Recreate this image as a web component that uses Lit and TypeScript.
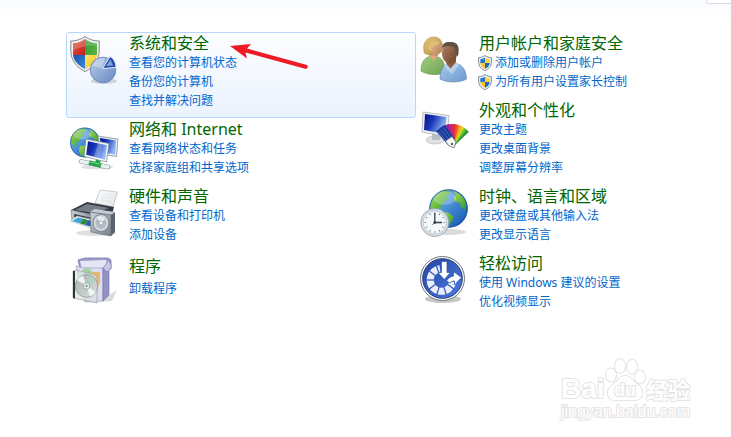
import { LitElement, html, css, svg, nothing, TemplateResult } from "lit";
import { customElement, property } from "lit/decorators.js";

type Link = { text: string; shield?: boolean };
type Category = {
  title: string;
  icon: string;
  links: Link[];
  active?: boolean;
  roomy?: boolean;
};

const leftColumn: Category[] = [
  {
    title: "系统和安全",
    icon: "security",
    active: true,
    links: [{ text: "查看您的计算机状态" }, { text: "备份您的计算机" }, { text: "查找并解决问题" }],
  },
  {
    title: "网络和 Internet",
    icon: "network",
    links: [{ text: "查看网络状态和任务" }, { text: "选择家庭组和共享选项" }],
  },
  {
    title: "硬件和声音",
    icon: "hardware",
    links: [{ text: "查看设备和打印机" }, { text: "添加设备" }],
  },
  { title: "程序", icon: "programs", roomy: true, links: [{ text: "卸载程序" }] },
];

const rightColumn: Category[] = [
  {
    title: "用户帐户和家庭安全",
    icon: "users",
    links: [
      { text: "添加或删除用户帐户", shield: true },
      { text: "为所有用户设置家长控制", shield: true },
    ],
  },
  {
    title: "外观和个性化",
    icon: "appearance",
    links: [{ text: "更改主题" }, { text: "更改桌面背景" }, { text: "调整屏幕分辨率" }],
  },
  {
    title: "时钟、语言和区域",
    icon: "clock",
    links: [{ text: "更改键盘或其他输入法" }, { text: "更改显示语言" }],
  },
  {
    title: "轻松访问",
    icon: "ease",
    links: [{ text: "使用 Windows 建议的设置" }, { text: "优化视频显示" }],
  },
];

const polar = (cx: number, cy: number, r: number, deg: number) => {
  const a = (deg * Math.PI) / 180;
  return `${(cx + r * Math.cos(a)).toFixed(2)} ${(cy + r * Math.sin(a)).toFixed(2)}`;
};

const globe = (cx: number, cy: number, r: number) => svg`
  <g transform="translate(${cx} ${cy}) scale(${r / 20})">
    <circle r="20" fill="url(#ocean)"/>
    <path d="M-17 -9C-13 -16 -7 -19 0 -19L1 -15L-3 -12L-1 -9L-6 -6L-8 -1L-12 1L-11 6L-15 4L-19 0C-19 -4 -18 -7 -17 -9Z" fill="url(#land)"/>
    <path d="M5 -18C12 -16 17 -11 19 -5L17 1L13 -1L12 -6L7 -7L5 -11L8 -14Z" fill="url(#land)"/>
    <path d="M-7 5L-1 4L5 8L4 13L0 18L-5 18L-8 12Z" fill="url(#land)"/>
    <ellipse cx="-4" cy="-11" rx="12" ry="7" fill="#fff" opacity=".25"/>
    <circle r="19.4" fill="none" stroke="#0b3a86" stroke-width="1" opacity=".6"/>
  </g>`;

const drawings: Record<string, () => TemplateResult | unknown> = {
  security: () => svg`
    <ellipse cx="34" cy="45" rx="13" ry="3" fill="#000" opacity=".15"/>
    <path d="M15 .5C10 4 5 5 .8 5V15C1 24 6 31 15 35.600C24 31 29 24 29.200 15V5C25 5 20 4 15 .5Z" fill="#f0f0f0" stroke="#83878a" stroke-width="1"/>
    <path d="M15 3C11 6 7 7 3 7.200V19H15Z" fill="url(#red)"/>
    <path d="M15 3C19 6 23 7 27 7.200V19H15Z" fill="url(#green)"/>
    <path d="M3 19H15V33C8 29.500 4 25 3 19Z" fill="url(#blue)"/>
    <path d="M27 19H15V33C22 29.500 26 25 27 19Z" fill="url(#yellow)"/>
    <path d="M3 7.200C7 7 11 6 15 3C19 6 23 7 27 7.200V10C18 9 9 11 3 15Z" fill="#fff" opacity=".2"/>
    <circle cx="33" cy="34" r="12.800" fill="url(#pie)" stroke="#6581b0" stroke-width=".8"/>
    <path d="M22 30A12 12 0 0 1 35 22L32 32Z" fill="#fff" opacity=".3"/>
    <path d="M32.500 32.500L40 20.500C43.500 22.500 46 26 46 31.500Z" fill="#2c4fae" stroke="#e3ebfa" stroke-width="1"/>
    <path d="M36 30L40.500 23.500L43 29.500Z" fill="#7f9fe0"/>`,
  network: () => svg`
    <ellipse cx="27" cy="45" rx="16" ry="2.500" fill="#000" opacity=".12"/>
    ${globe(15, 20.5, 15)}
    <path d="M28 14L48 17L46.500 34.500L30 32Z" fill="#e4e9ee" stroke="#7b8793" stroke-width=".7"/>
    <path d="M30 16L46 18.500L45 32.500L31 30Z" fill="url(#screenWide)"/>
    <path d="M16 17L39 21.500L36.500 40L14 34.500Z" fill="#f3f5f7" stroke="#7b8793" stroke-width=".7"/>
    <path d="M18 19.200L37 23.200L35 37.500L16.300 32.800Z" fill="url(#screenWide)"/>
    <path d="M28 21.300L32 22.200L29 36L24 34.800Z" fill="#fff" opacity=".22"/>
    <path d="M11 39.500L38 45" stroke="#8b9694" stroke-width="4.600" stroke-linecap="round"/>
    <path d="M11 39.500L38 45" stroke="#eceff0" stroke-width="3.400" stroke-linecap="round"/>
    <path d="M19 40.500L31 43.500" stroke="#22a04a" stroke-width="4.600"/>
    <path d="M26 37.500L31 39L29 42L25 41Z" fill="#22a04a"/>
    <path d="M19 39.700L30 42.200" stroke="#7fdc93" stroke-width="1"/>`,
  hardware: () => svg`
    <ellipse cx="26" cy="44" rx="20" ry="3" fill="#000" opacity=".13"/>
    <path d="M30 1L47.500 3L43 18L25 14Z" fill="url(#paper)" stroke="#b6babd" stroke-width=".7"/>
    <path d="M33 5L44 6.500M32 8L43 9.500M31 11L42 12.500" stroke="#d5d9dc" stroke-width=".6"/>
    <path d="M1 21L17 13L44 18L42 26L24 27Z" fill="#363b41"/>
    <path d="M5 21L17 15L39 19L25 24Z" fill="#767f88"/>
    <path d="M1 21L24 26V37L2 32Z" fill="url(#metal)" stroke="#6e757b" stroke-width=".6"/>
    <path d="M4 25L22 29V35L5 31Z" fill="#31383e"/>
    <path d="M0 32L7 27L24 31L21 39Z" fill="#f1f4f4" stroke="#aaa" stroke-width=".5"/>
    <path d="M2 32L8 28.500L13 29.500L10 34.500Z" fill="#3aa6db"/>
    <path d="M10 34.500L13 29.500L18 31L15 36Z" fill="#38883c"/>
    <path d="M15 36L18 31L23 32L20 37.500Z" fill="#2762b1"/>
    <path d="M20 23L25 20L45 23L41 26Z" fill="#c3ccd3"/>
    <path d="M20 23L41 26V47L21 43Z" fill="url(#metal)" stroke="#667078" stroke-width=".7"/>
    <path d="M41 26L45 23V43L41 47Z" fill="#59636d"/>
    <ellipse cx="31" cy="34" rx="8" ry="8.500" fill="#d5dbdf" stroke="#7b858d"/>
    <ellipse cx="31" cy="34" rx="5.500" ry="6" fill="#b4bdc4"/>
    <path d="M31 34L27 28.500A6 6 0 0 1 35 30Z" fill="#fff" opacity=".7"/>
    <circle cx="31" cy="34" r="2" fill="#f6f8f9" stroke="#7e878d" stroke-width=".5"/>`,
  programs: () => svg`
    <path d="M28 46L41 38L47 34L42 45Z" fill="#000" opacity=".14"/>
    <path d="M8 4L15 2H38L41 4V13H10Z" fill="#9d9dcb" stroke="#6f6fa4" stroke-width=".7"/>
    <path d="M10 5L36 4L38 12L12 13Z" fill="#e6e5f6"/>
    <path d="M6 10L14 12H33V45L15 46Z" fill="#ddddf0" stroke="#8f8fb9" stroke-width=".6"/>
    <path d="M33 12L39 7V39L33 45Z" fill="#9393c6" stroke="#6c6ca5" stroke-width=".6"/>
    <path d="M33 12L39 4L42 11L37 16Z" fill="#c5c5e4" stroke="#7b7bae" stroke-width=".6"/>
    <path d="M12 14L18 11L24 18L16 21Z" fill="#a6d3a1"/>
    <path d="M22 16H30V27L25 34Z" fill="#edba67"/>
    <path d="M3 15L6 14L27 19V47L3 42Z" fill="#d9e0df" fill-opacity=".6" stroke="#929b9a" stroke-width=".6"/>
    <path d="M3 15H5V42.500L3 42Z" fill="#2d3332"/>
    <circle cx="16.500" cy="30" r="11.300" fill="url(#disc)" stroke="#87918e" stroke-width=".7"/>
    <path d="M16.500 30L7 24A11 11 0 0 1 13 19.400Z" fill="#fff" opacity=".8"/>
    <path d="M16.500 30L26 36A11 11 0 0 1 20 40.600Z" fill="#fff" opacity=".75"/>
    <path d="M16.500 30L20 19.500A11 11 0 0 1 26 25Z" fill="#a4d9bd" opacity=".6"/>
    <circle cx="16.500" cy="30" r="3.200" fill="#eef5f3" stroke="#75908c" stroke-width=".7"/>
    <circle cx="16.500" cy="30" r="1.200" fill="#659c99"/>`,
  users: () => svg`
    <path d="M1 35C1 25 6 20 13 20C21 20 25 25 25 36C18 40 7 39 1 35Z" fill="url(#shirtGreen)" stroke="#5f8d4b" stroke-width=".6"/>
    <path d="M9 20L14 25L18 20V15H9Z" fill="#dca77e"/>
    <path d="M4 15C2 6 8 1 14 1C20 1 24 6 22 15C20 19 8 20 4 17Z" fill="url(#hair)" stroke="#a47f3c" stroke-width=".5"/>
    <ellipse cx="15.500" cy="12" rx="5" ry="8" fill="url(#skin)"/>
    <path d="M8 13C8 5 14 3 20 7C17 9 12 9 11 15Z" fill="#e0bf74"/>
    <path d="M20 43C20 32 25 27 32 27C41 27 46 32 46.500 43C40 47 27 47 20 43Z" fill="url(#shirtBlue)" stroke="#5d7ea9" stroke-width=".6"/>
    <path d="M26 27L31 33L36 27V22H27Z" fill="#8d5b3c"/>
    <ellipse cx="29.500" cy="17.500" rx="7.500" ry="10" fill="url(#skinDark)"/>
    <path d="M22 13C22 7 26 5.500 31 6C38 6 40 11 38 20C35 20 36 14 34 11C29 10 25 9 22 13Z" fill="#5d5148"/>
    <path d="M25 27L30 33L36 26L39 29L32 38L24 30Z" fill="#c4dbf2" opacity=".75"/>`,
  appearance: () => svg`
    <ellipse cx="15" cy="37" rx="9" ry="4" fill="#dfe2e5" stroke="#aab0b5" stroke-width=".6"/>
    <path d="M12 29L21 31L20 37H12Z" fill="#b9bfc4"/>
    <path d="M3 9L29 12.500L27 33.500L2 29Z" fill="#f1f2f2" stroke="#aab0b5" stroke-width=".8"/>
    <path d="M5 11L26.500 14L25 31L4 27Z" fill="url(#screenWide)"/>
    ${[
      ["#25943d", 42],
      ["#74bf2c", 34],
      ["#d9d922", 26],
      ["#f3a31d", 18],
      ["#ea5a22", 10],
      ["#dc2d3b", 2],
      ["#cf2183", -7],
      ["#9d2596", -16],
      ["#5b249f", -26],
    ].map(
      ([color, deg]) => svg`
      <path d="M31 43L28.500 21.500L35 21L33.500 43Z" fill=${color} transform="rotate(${deg} 32 43)"/>`
    )}
    <path d="M16 28L25 22L35 36L28 42Z" fill="#1c3c98"/>
    <path d="M18.500 29L27 38.500M21 27L29 36.500M23.500 25L31 34.500" stroke="#4470cb" stroke-width=".9"/>
    <path d="M25.500 38L32 33.500L36 39L34 45L28 42Z" fill="#f3f5f6" stroke="#535e6a" stroke-width=".7"/>
    <circle cx="32" cy="41" r="1.100" fill="#26364d"/>`,
  clock: () => svg`
    <ellipse cx="28" cy="43" rx="18" ry="3" fill="#000" opacity=".14"/>
    ${globe(28.5, 19.5, 19.3)}
    <circle cx="14.800" cy="33.500" r="14" fill="#d7e0e5" stroke="#8fa0aa" stroke-width=".8"/>
    <circle cx="14.800" cy="33.500" r="11.600" fill="#f6f9fa" stroke="#b3c1c8" stroke-width=".8"/>
    ${Array.from(
      { length: 12 },
      (_, i) => svg`<path d="M14.800 23.200V24.800" stroke="#6b7a83" stroke-width=".9" transform="rotate(${i * 30} 14.800 33.500)"/>`
    )}
    <path d="M14.800 24V33.500H22" fill="none" stroke="#2d4252" stroke-width="1.300"/>
    <path d="M14.800 33.500L12 36" stroke="#6f8796" stroke-width=".8"/>
    <circle cx="14.800" cy="33.500" r="1.400" fill="#2d4252"/>`,
  ease: () => svg`
    <ellipse cx="23" cy="43" rx="18" ry="4" fill="#000" opacity=".22"/>
    <circle cx="22.500" cy="22.500" r="22" fill="#fafafa" stroke="#707781" stroke-width="1"/>
    <circle cx="22.500" cy="22.500" r="19.800" fill="url(#access)" stroke="#263b76" stroke-width="1"/>
    <path d="M${polar(21.5, 24, 11.3, 8)}A11.300 11.300 0 1 1 ${polar(21.5, 24, 11.3, 262)}" fill="none" stroke="#e9eefa" stroke-width="7"/>
    ${[36, 72, 108, 144, 180, 216, 250].map(
      (deg) => svg`<path d="M${polar(21.5, 24, 7, deg)}L${polar(21.5, 24, 16, deg)}" stroke="#3158b9" stroke-width="1.200"/>`
    )}
    <path d="M21.500 5.500H27V16.500H30.500L24.200 23.500L18 16.500H21.500Z" fill="#fff" stroke="#3158b9" stroke-width=".8"/>
    <path d="M26.500 25C28.500 21.500 31 20.500 33.500 20V15.500L41.500 21.500L34.500 29V25C32.500 25 31 25.500 30 27Z" fill="#fff" stroke="#3158b9" stroke-width=".8"/>`,
};

const gradients = svg`
  <defs>
    <linearGradient id="screenWide" x1="0" y1="0" x2="1" y2=".4">
      <stop offset="0" stop-color="#06128c"/>
      <stop offset=".45" stop-color="#1a38b8"/>
      <stop offset="1" stop-color="#8db8f4"/>
    </linearGradient>
    ${[
      ["ocean", "#7cc6f5", "#0f4fae"],
      ["land", "#a4da55", "#2f9a34"],
      ["red", "#e8573f", "#c5201f"],
      ["green", "#2e9a35", "#5db53f"],
      ["blue", "#1550a8", "#3f8ddd"],
      ["yellow", "#fbe76a", "#f0bd18"],
      ["pie", "#b9cdec", "#6788bf"],
      ["paper", "#ffffff", "#dfe3e6"],
      ["metal", "#cbd3da", "#737e88"],
      ["disc", "#a9b3b1", "#d9dfdd"],
      ["shirtGreen", "#a2cf80", "#6da351"],
      ["shirtBlue", "#a9cbee", "#6b98cc"],
      ["hair", "#e4c67e", "#b38c43"],
      ["skin", "#e8bd96", "#b97f55"],
      ["skinDark", "#b18061", "#6f4229"],
      ["access", "#2545a4", "#4a7be0"],
    ].map(
      ([id, from, to]) => svg`
      <linearGradient id=${id} x1="0" y1="0" x2="1" y2="1">
        <stop offset="0" stop-color=${from}/><stop offset="1" stop-color=${to}/>
      </linearGradient>`
    )}
  </defs>`;

@customElement("category-icon")
class CategoryIcon extends LitElement {
  @property() name = "";

  static styles = css`
    :host {
      display: block;
      width: 48px;
      height: 48px;
    }
    .art {
      display: block;
      width: 100%;
      height: 100%;
      overflow: visible;
    }
  `;

  render() {
    return html`<svg class="art" viewBox="0 0 48 48" aria-hidden="true">
      ${gradients} ${drawings[this.name]?.()}
    </svg>`;
  }
}

@customElement("category-card")
class CategoryCard extends LitElement {
  @property({ attribute: false }) category!: Category;

  static styles = css`
    :host {
      display: block;
    }
    .card {
      display: flex;
      gap: 11px;
      padding: 0 3px 7px;
      border: 1px solid transparent;
      border-radius: 3px;
    }
    .card.active {
      position: relative;
      border-color: #b8d6fb;
      background: linear-gradient(#fcfdff, #ebf3fe);
    }
    .icon {
      flex: none;
      margin-top: 3px;
      height: 48px;
    }
    .body {
      min-width: 0;
    }
    .roomy .body {
      padding-top: 3px;
    }
    .roomy .title {
      margin-bottom: 3px;
    }
    .title {
      margin: 0;
      font-size: 16px;
      line-height: 20px;
      font-weight: 400;
    }
    .title a {
      color: #006600;
    }
    .links {
      margin: 0;
      padding: 0;
      list-style: none;
      font-size: 12px;
      line-height: 19px;
    }
    .links li {
      display: flex;
      align-items: center;
    }
    a {
      color: #0066cc;
      text-decoration: none;
      white-space: nowrap;
    }
    a:hover {
      text-decoration: underline;
    }
    .shield {
      flex: none;
      width: 14px;
      height: 16px;
      margin: 0 3px 0 -1px;
    }
    .arrow {
      position: absolute;
      left: 163px;
      top: 10px;
      width: 80px;
      height: 28px;
      pointer-events: none;
    }
  `;

  private shield() {
    return html`<svg class="shield" viewBox="0 0 14 16" aria-hidden="true">
      <path d="M7 .5C5 2 3 2.500 .6 2.600V7C.7 11 3 14 7 15.600C11 14 13.300 11 13.400 7V2.600C11 2.500 9 2 7 .5Z" fill="#eef2f5" stroke="#77838e" stroke-width=".9"/>
      <path d="M7 2.500C5.500 3.600 4 4 2.300 4.200V8H7Z" fill="#2878d0"/>
      <path d="M7 2.500C8.500 3.600 10 4 11.700 4.200V8H7Z" fill="#fbd23a"/>
      <path d="M2.300 8H7V13.800C4 12.500 2.500 10.500 2.300 8Z" fill="#f8c928"/>
      <path d="M11.700 8H7V13.800C10 12.500 11.500 10.500 11.700 8Z" fill="#2069c2"/>
    </svg>`;
  }

  render() {
    const c = this.category;
    return html`
      <section class="card ${c.active ? "active" : ""} ${c.roomy ? "roomy" : ""}">
        <category-icon class="icon" name=${c.icon}></category-icon>
        <div class="body">
          <h2 class="title"><a href="#">${c.title}</a></h2>
          <ul class="links">
            ${c.links.map((l) => html`<li>${l.shield ? this.shield() : nothing}<a href="#">${l.text}</a></li>`)}
          </ul>
        </div>
        ${c.active
          ? html`<svg class="arrow" viewBox="0 0 80 28" aria-hidden="true">
              <path d="M0 3L21 1L17 5.600L77 22Q79 24.500 76 26L15.500 9.500L17 15.500Z" fill="#ed1c24"/>
            </svg>`
          : nothing}
      </section>
    `;
  }
}

@customElement("app-root")
class AppRoot extends LitElement {
  static styles = css`
    :host {
      display: block;
      position: relative;
      min-height: 100vh;
      background: #fff;
      font-family: "Noto Sans", "Noto Sans CJK SC", sans-serif;
    }
    .top {
      display: flex;
      justify-content: flex-end;
      align-items: flex-start;
      height: 32px;
      background: linear-gradient(#f8fafe, #fff 20px);
    }
    .view-box {
      box-sizing: border-box;
      width: 25px;
      height: 4px;
      border: solid #dcdde3;
      border-width: 0 0 1px 1px;
      border-bottom-left-radius: 3px;
      background: #fff;
    }
    .categories {
      display: grid;
      grid-template-columns: minmax(0, 10fr) minmax(0, 9fr);
      padding-left: 66px;
    }
    .watermark {
      position: absolute;
      right: 36px;
      bottom: 14px;
      width: 136px;
      height: 68px;
      pointer-events: none;
      fill: #fff;
      stroke: #e4e4e4;
      stroke-width: 2px;
      stroke-linejoin: round;
      paint-order: stroke;
      font-family: "Liberation Sans", "Noto Sans CJK SC", sans-serif;
    }
    .brand {
      font-size: 28px;
      font-weight: 700;
    }
    .du {
      font-size: 18px;
      font-weight: 700;
    }
    .name {
      font-size: 22px;
      font-weight: 700;
    }
    .site {
      font-size: 16px;
    }
  `;

  render() {
    return html`
      <header class="top"><div class="view-box"></div></header>
      <main class="categories">
        <div>${leftColumn.map((c) => html`<category-card .category=${c}></category-card>`)}</div>
        <div>${rightColumn.map((c) => html`<category-card .category=${c}></category-card>`)}</div>
      </main>
      <svg class="watermark" viewBox="0 0 136 68" role="img" aria-label="Baidu 经验 jingyan.baidu.com">
        <text class="brand" x="2" y="43">Bai</text>
        <ellipse cx="52" cy="20" rx="5" ry="6.500" />
        <ellipse cx="61" cy="11" rx="5" ry="7" />
        <ellipse cx="73" cy="12" rx="5" ry="7" />
        <ellipse cx="81" cy="22" rx="5" ry="6.500" />
        <path d="M66 21C60 21 59 26 54 30C46 35 48 45 56 45H76C84 45 86 35 79 30C74 26 72 21 66 21Z" />
        <text class="du" x="55" y="41">du</text>
        <text class="name" x="87" y="43">经验</text>
        <text class="site" x="2" y="62">jingyan.baidu.com</text>
      </svg>
    `;
  }
}
